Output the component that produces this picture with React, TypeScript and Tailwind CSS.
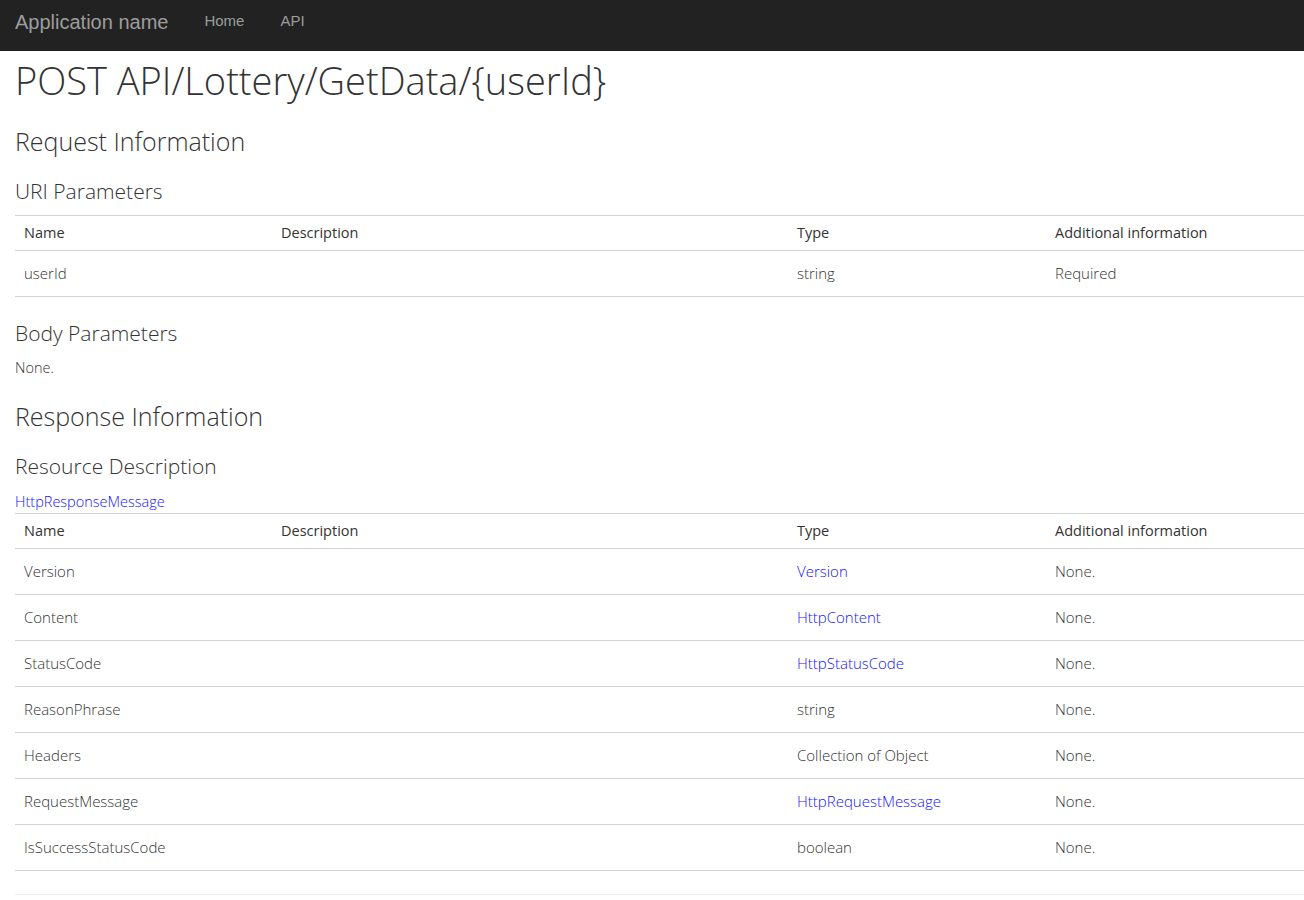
import React from "react";

type Row = { name: string; type: string; typeLink?: boolean; info: string };

const responseRows: Row[] = [
  { name: "Version", type: "Version", typeLink: true, info: "None." },
  { name: "Content", type: "HttpContent", typeLink: true, info: "None." },
  { name: "StatusCode", type: "HttpStatusCode", typeLink: true, info: "None." },
  { name: "ReasonPhrase", type: "string", info: "None." },
  { name: "Headers", type: "Collection of Object", info: "None." },
  { name: "RequestMessage", type: "HttpRequestMessage", typeLink: true, info: "None." },
  { name: "IsSuccessStatusCode", type: "boolean", info: "None." },
];

const ParamTable: React.FC<{ rows: Row[] }> = ({ rows }) => (
  <table className="w-full border-collapse text-[15px] text-[#333]">
    <thead>
      <tr className="h-[35px] border-t border-b border-[#d4d4d4] text-left">
        <th className="w-[257px] pl-[9px] text-[14.5px] font-normal">Name</th>
        <th className="w-[516px] pl-[9px] text-[14.5px] font-normal">Description</th>
        <th className="w-[258px] pl-[9px] text-[14.5px] font-normal">Type</th>
        <th className="pl-[9px] text-[14.5px] font-normal">Additional information</th>
      </tr>
    </thead>
    <tbody className="font-light">
      {rows.map((r) => (
        <tr key={r.name} className="h-[46px] border-b border-[#d4d4d4]">
          <td className="pl-[9px]">{r.name}</td>
          <td className="pl-[9px]"></td>
          <td className={r.typeLink ? "pl-[9px] text-[#1414ff]" : "pl-[9px]"}>{r.type}</td>
          <td className="pl-[9px]">{r.info}</td>
        </tr>
      ))}
    </tbody>
  </table>
);

const App: React.FC = () => {
  return (
    <div className="min-h-[900px] bg-white font-['Open_Sans',sans-serif] text-[#333]">
      <div className="flex h-[51px] items-center bg-[#222] pb-[8px] pl-[15px] font-['Liberation_Sans',Arial,sans-serif] text-[#9d9d9d]">
        <span className="text-[20px]">Application name</span>
        <span className="ml-[36px] text-[15px]">Home</span>
        <span className="ml-[36px] text-[15px]">API</span>
      </div>
      <div className="pl-[15px]">
        <h1 className="mt-[2px] h-[54px] text-[38px] leading-[54px] font-light">
          POST API/Lottery/GetData/{"{userId}"}
        </h1>
        <h2 className="mt-[19px] h-[30px] text-[25px] leading-[30px] font-light">Request Information</h2>
        <h3 className="mt-[23px] h-[24px] text-[21px] leading-[24px] font-light">URI Parameters</h3>
        <div className="mt-[12px]">
          <ParamTable rows={[{ name: "userId", type: "string", info: "Required" }]} />
        </div>
        <h3 className="mt-[24px] h-[24px] text-[21px] leading-[24px] font-light">Body Parameters</h3>
        <p className="mt-[13px] text-[14.5px] leading-[20px] font-light">None.</p>
        <h2 className="mt-[23px] h-[30px] text-[25px] leading-[30px] font-light">Response Information</h2>
        <h3 className="mt-[23px] h-[24px] text-[21px] leading-[24px] font-light">Resource Description</h3>
        <p className="mt-[14px] text-[14.5px] leading-[20px] font-light text-[#1414ff]">HttpResponseMessage</p>
        <div className="mt-[1px]">
          <ParamTable rows={responseRows} />
        </div>
        <hr className="mt-[23px] border-t border-[#eee]" />
      </div>
    </div>
  );
};

export default App;
